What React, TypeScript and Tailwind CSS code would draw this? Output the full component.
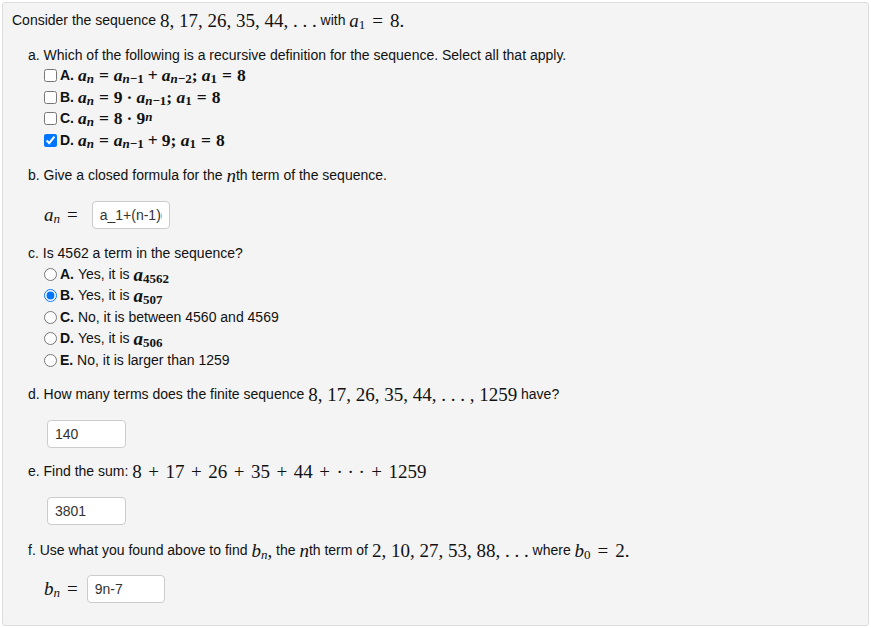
import React from "react";

const serif = "font-['Liberation_Serif',serif]";

function M({ children, bold = false, small = false }: { children: React.ReactNode; bold?: boolean; small?: boolean }) {
  return (
    <span
      className={`${serif} ${small ? "text-[17.5px]" : "text-[19px]"} leading-none whitespace-nowrap ${bold ? "font-bold" : ""}`}
    >
      {children}
    </span>
  );
}

function V({ children }: { children: React.ReactNode }) {
  return <i className="italic">{children}</i>;
}

function Sub({ children }: { children: React.ReactNode }) {
  return <sub className="text-[13px] relative top-[2px]">{children}</sub>;
}

// binary operator / relation with math-style spacing
function Op({ children, rel = false, tight = false }: { children: React.ReactNode; rel?: boolean; tight?: boolean }) {
  const pad = tight ? (rel ? "px-[5px]" : "px-[4px]") : rel ? "px-[7px]" : "px-[6.5px]";
  return <span className={pad}>{children}</span>;
}

function Check({ checked = false }: { checked?: boolean }) {
  return (
    <input
      type="checkbox"
      checked={checked}
      readOnly
      className="m-0 ml-[8px] mr-[3px] h-[13px] w-[13px] shrink-0"
    />
  );
}

function Radio({ checked = false }: { checked?: boolean }) {
  return (
    <input
      type="radio"
      checked={checked}
      readOnly
      className="m-0 ml-[8px] mr-[3px] h-[13px] w-[13px] shrink-0"
    />
  );
}

function Answer({ value, width, className = "" }: { value: string; width: string; className?: string }) {
  return (
    <input
      readOnly
      value={value}
      className={`h-[28px] ${width} ${className} rounded-[4px] border border-[#cccccc] bg-white px-[7px] text-[14px] text-[#333] outline-none font-['Liberation_Sans',Arial,sans-serif]`}
    />
  );
}

function Row({ children, className = "" }: { children: React.ReactNode; className?: string }) {
  return <div className={`flex h-[20px] items-center whitespace-nowrap ${className}`}>{children}</div>;
}

function Opt({ children }: { children: React.ReactNode }) {
  return <div className="flex h-[21.5px] items-center whitespace-nowrap pl-[8px]">{children}</div>;
}

const an = (
  <>
    <V>a</V>
    <Sub>
      <V>n</V>
    </Sub>
  </>
);

export default function App() {
  return (
    <div className="h-[628px] w-[871px] bg-white p-[2px] font-['Liberation_Sans',Arial,sans-serif] text-[14px] text-[#111]">
      <div className="h-[624px] w-[867px] rounded-[3px] border border-[#dddddd] bg-[#f4f4f4] pl-[9px] pt-[7px]">
        <Row>
          <span>Consider the sequence&nbsp;</span>
          <M>8, 17, 26, 35, 44, . . .</M>
          <span>&nbsp;with&nbsp;</span>
          <M>
            <V>a</V>
            <Sub>1</Sub>
            <Op rel>=</Op>8.
          </M>
        </Row>

        <div className="pl-[16px]">
          <Row className="mt-[15px]">
            a. Which of the following is a recursive definition for the sequence. Select all that apply.
          </Row>
          <div>
            <Opt>
              <Check />
              <b>A.&nbsp;</b>
              <M bold small>
                {an}
                <Op rel tight>=</Op>
                <V>a</V>
                <Sub>
                  <V>n</V>−1
                </Sub>
                <Op tight>+</Op>
                <V>a</V>
                <Sub>
                  <V>n</V>−2
                </Sub>
                ; <V>a</V>
                <Sub>1</Sub>
                <Op rel tight>=</Op>8
              </M>
            </Opt>
            <Opt>
              <Check />
              <b>B.&nbsp;</b>
              <M bold small>
                {an}
                <Op rel tight>=</Op>9<Op tight>·</Op>
                <V>a</V>
                <Sub>
                  <V>n</V>−1
                </Sub>
                ; <V>a</V>
                <Sub>1</Sub>
                <Op rel tight>=</Op>8
              </M>
            </Opt>
            <Opt>
              <Check />
              <b>C.&nbsp;</b>
              <M bold small>
                {an}
                <Op rel tight>=</Op>8<Op tight>·</Op>9
                <sup className="relative -top-[3px] text-[13px]">
                  <V>n</V>
                </sup>
              </M>
            </Opt>
            <Opt>
              <Check checked />
              <b>D.&nbsp;</b>
              <M bold small>
                {an}
                <Op rel tight>=</Op>
                <V>a</V>
                <Sub>
                  <V>n</V>−1
                </Sub>
                <Op tight>+</Op>9; <V>a</V>
                <Sub>1</Sub>
                <Op rel tight>=</Op>8
              </M>
            </Opt>
          </div>

          <Row className="mt-[14.5px]">
            <span>b. Give a closed formula for the&nbsp;</span>
            <M>
              <V>n</V>
            </M>
            <span>th term of the sequence.</span>
          </Row>
          <div className="mt-[15px] flex h-[28px] items-center pl-[16px]">
            <M>
              {an}
              <Op rel>=</Op>
            </M>
            <Answer value="a_1+(n-1)(9)" width="w-[78px]" className="ml-[7px]" />
          </div>

          <Row className="mt-[15px]">c. Is 4562 a term in the sequence?</Row>
          <div>
            <Opt>
              <Radio />
              <b>A.</b>&nbsp;Yes, it is&nbsp;
              <M bold>
                <V>a</V>
                <Sub>4562</Sub>
              </M>
            </Opt>
            <Opt>
              <Radio checked />
              <b>B.</b>&nbsp;Yes, it is&nbsp;
              <M bold>
                <V>a</V>
                <Sub>507</Sub>
              </M>
            </Opt>
            <Opt>
              <Radio />
              <b>C.</b>&nbsp;No, it is between 4560 and 4569
            </Opt>
            <Opt>
              <Radio />
              <b>D.</b>&nbsp;Yes, it is&nbsp;
              <M bold>
                <V>a</V>
                <Sub>506</Sub>
              </M>
            </Opt>
            <Opt>
              <Radio />
              <b>E.</b>&nbsp;No, it is larger than 1259
            </Opt>
          </div>

          <Row className="mt-[13.5px]">
            <span>d. How many terms does the finite sequence&nbsp;</span>
            <M>8, 17, 26, 35, 44, . . . , 1259</M>
            <span>&nbsp;have?</span>
          </Row>
          <div className="mt-[15px] flex h-[28px] items-center pl-[19px]">
            <Answer value="140" width="w-[79px]" />
          </div>

          <Row className="mt-[14px]">
            <span>e. Find the sum:&nbsp;</span>
            <M>
              8<Op>+</Op>17<Op>+</Op>26<Op>+</Op>35<Op>+</Op>44<Op>+</Op>· · ·<Op>+</Op>1259
            </M>
          </Row>
          <div className="mt-[15px] flex h-[28px] items-center pl-[19px]">
            <Answer value="3801" width="w-[79px]" />
          </div>

          <Row className="mt-[16px]">
            <span>f. Use what you found above to find&nbsp;</span>
            <M>
              <V>b</V>
              <Sub>
                <V>n</V>
              </Sub>
              ,
            </M>
            <span>&nbsp;the&nbsp;</span>
            <M>
              <V>n</V>
            </M>
            <span>th term of&nbsp;</span>
            <M>2, 10, 27, 53, 88, . . .</M>
            <span>&nbsp;where&nbsp;</span>
            <M>
              <V>b</V>
              <Sub>0</Sub>
              <Op rel>=</Op>2.
            </M>
          </Row>
          <div className="mt-[14px] flex h-[28px] items-center pl-[16px]">
            <M>
              <V>b</V>
              <Sub>
                <V>n</V>
              </Sub>
              <Op rel>=</Op>
            </M>
            <Answer value="9n-7" width="w-[78px]" className="ml-[2px]" />
          </div>
        </div>
      </div>
    </div>
  );
}
